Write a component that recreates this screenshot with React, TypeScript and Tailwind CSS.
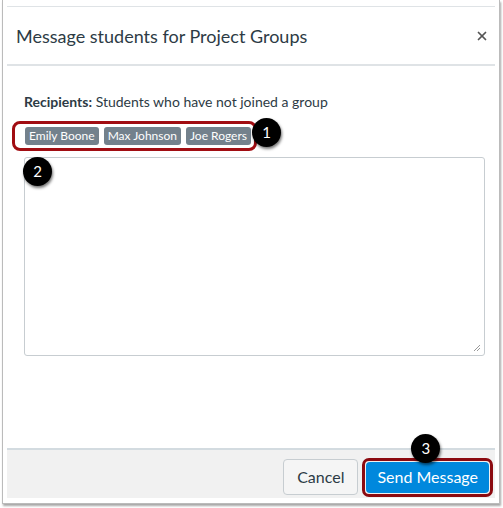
import { X } from "lucide-react";

const recipients = ["Emily Boone", "Max Johnson", "Joe Rogers"];

// numbered callout bubble used in the help screenshot
const Callout = ({ n, className }: { n: number; className: string }) => (
  <div
    className={`absolute w-[29px] h-[29px] rounded-full bg-black text-white text-[15px] flex items-center justify-center shadow-[1px_2px_3px_rgba(0,0,0,0.55)] ${className}`}
  >
    {n}
  </div>
);

const App = () => {
  return (
    <div className="w-[503px] h-[508px] bg-white font-['Lato','Open_Sans',sans-serif] text-[#2d3b45]">
      <div className="relative ml-[2px] w-[498px] h-[504px] border-l border-r border-b border-[#bbb] shadow-[1px_2px_2px_rgba(0,0,0,0.35)] pt-[6px] px-[4px] pb-[5px]">
        <div className="flex flex-col h-full border-t border-[#dfe3e6]">
          {/* header */}
          <div className="flex items-center justify-between h-[59px] pl-[9px] pr-[6px] border-b-2 border-[#dfe3e6]">
            <h1 className="text-[18px] leading-none">Message students for Project Groups</h1>
            <X className="w-[14px] h-[14px] text-[#555]" strokeWidth={3} />
          </div>

          {/* body */}
          <div className="flex-1 pl-[17px] pr-[10px] pt-[27px]">
            <p className="text-[14px] leading-[18px]">
              <span className="font-bold">Recipients:</span> Students who have not joined a group
            </p>
            <div className="relative mt-[10px]">
              <div className="inline-flex gap-[5px] ml-[-12px] py-[3px] pl-[10px] pr-[3px] rounded-[8px] border-[3px] border-[#a10d12]">
                {recipients.map((name) => (
                  <span
                    key={name}
                    className="bg-[#73818c] text-white text-[12px] leading-[18px] px-[4px] rounded-[3px]"
                  >
                    {name}
                  </span>
                ))}
              </div>
              <Callout n={1} className="left-[228px] top-[-3px]" />
            </div>
            <div className="relative mt-[6px] h-[199px] border border-[#c7cdd1] rounded-[3px] bg-white">
              <Callout n={2} className="left-[-2px] top-[-1px]" />
              <svg className="absolute right-[3px] bottom-[3px]" width="8" height="8" viewBox="0 0 8 8">
                <path d="M1 7L7 1M4 7L7 4" stroke="#999" strokeWidth="1" />
              </svg>
            </div>
          </div>

          {/* footer */}
          <div className="relative flex justify-end items-center gap-[4px] h-[50px] bg-[#f1f1f1] border-t-2 border-[#d3dbe0] pt-[6px] pr-[2px]">
            <button className="h-[36px] px-[13px] text-[16px] bg-[#f5f5f5] border border-[#c7cdd1] rounded-[4px] text-[#2d3b45]">
              Cancel
            </button>
            <div className="relative p-[1px] rounded-[7px] border-[3px] border-[#8b0a10]">
              <button className="h-[31px] px-[11px] text-[16px] bg-[#0088dd] text-white rounded-[4px]">
                Send Message
              </button>
              <Callout n={3} className="left-[46px] top-[-27px]" />
            </div>
          </div>
        </div>
      </div>
    </div>
  );
};

export default App;
